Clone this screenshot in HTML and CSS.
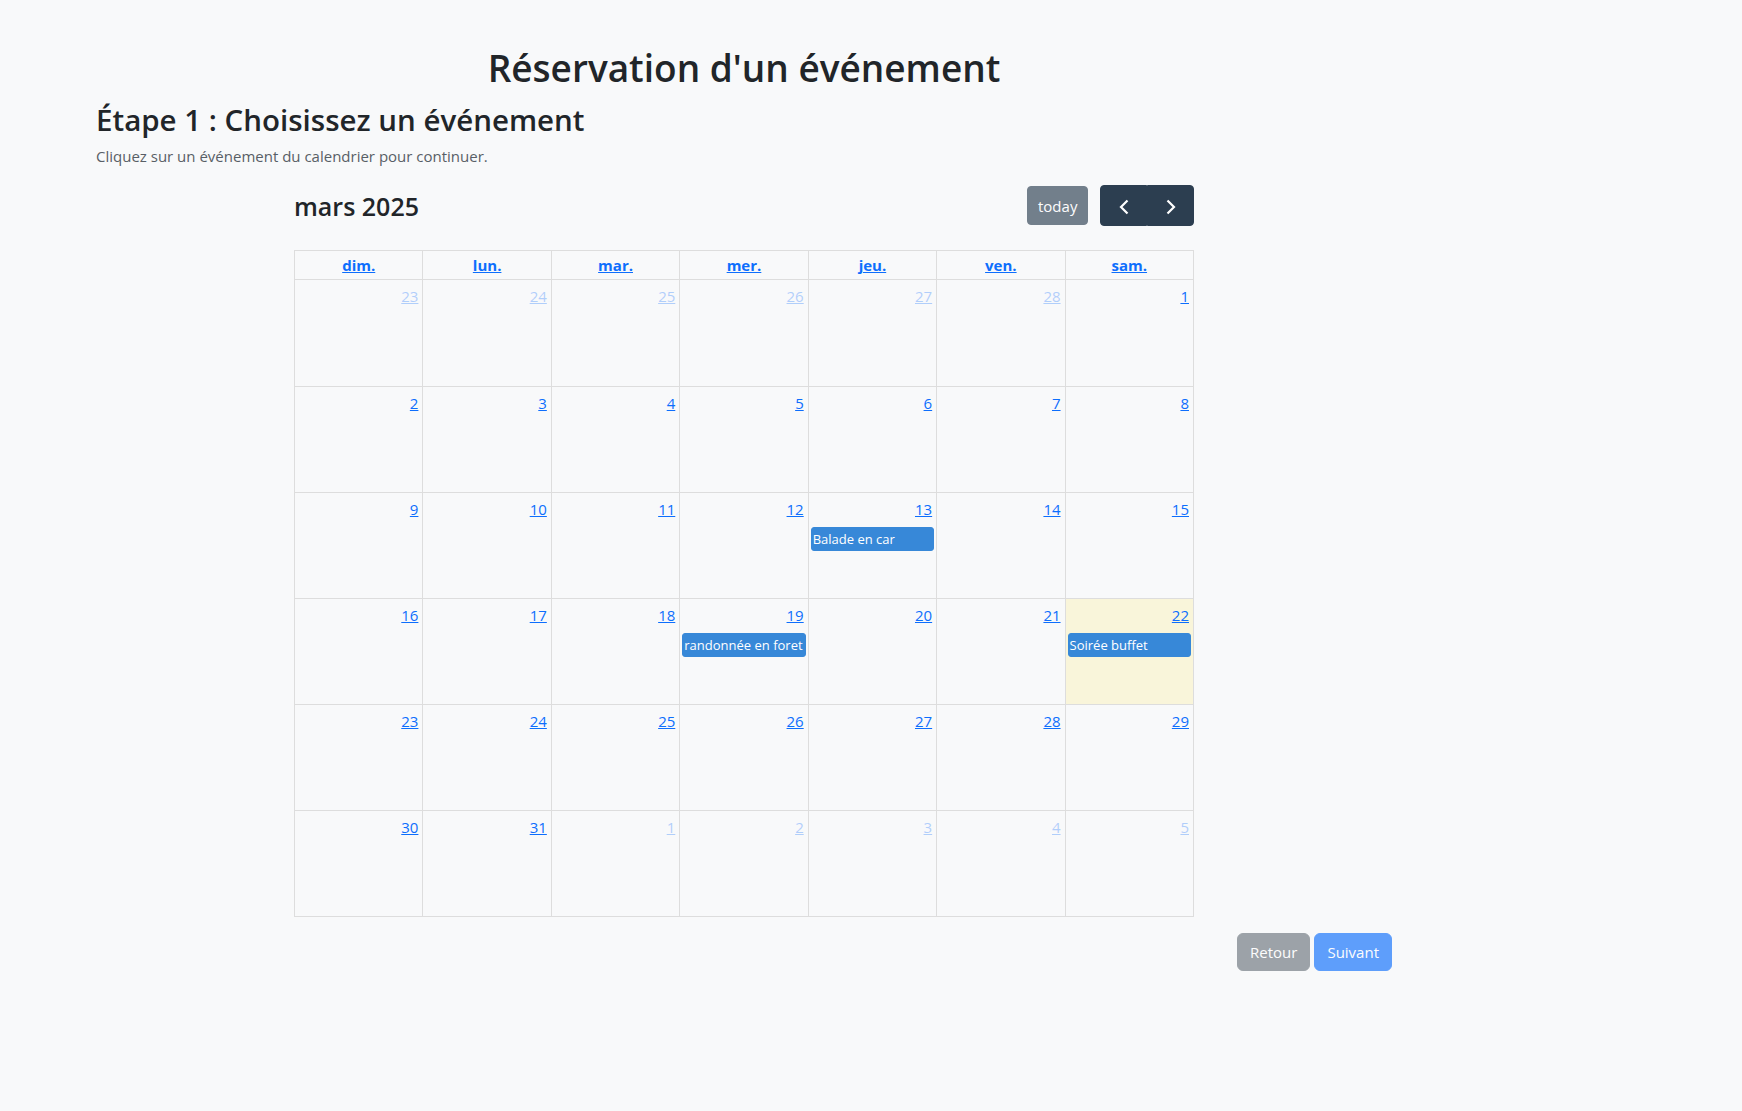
FILE: index.html
```html
<!DOCTYPE html>
<html lang="fr">
<head>
<meta charset="utf-8">
<title>Réservation d'un événement</title>
<link rel="stylesheet" href="styles.css">
</head>
<body>
<div class="page">
  <h1 class="title">Réservation d'un événement</h1>
  <h2 class="step">Étape 1 : Choisissez un événement</h2>
  <p class="hint">Cliquez sur un événement du calendrier pour continuer.</p>

  <div class="calendar">
    <div class="toolbar">
      <h2 class="cal-title">mars 2025</h2>
      <div class="toolbar-right">
        <button class="fc-btn today" disabled>today</button>
        <div class="btn-group">
          <button class="fc-btn nav prev" aria-label="prev"><svg width="24" height="24" viewBox="0 0 24 24"><path d="M15.5 5.5 L9 12 L15.5 18.5" fill="none" stroke="#fff" stroke-width="2.2"/></svg></button>
          <button class="fc-btn nav next" aria-label="next"><svg width="24" height="24" viewBox="0 0 24 24"><path d="M8.5 5.5 L15 12 L8.5 18.5" fill="none" stroke="#fff" stroke-width="2.2"/></svg></button>
        </div>
      </div>
    </div>

    <div class="grid">
      <div class="head"><a href="#">dim.</a></div>
      <div class="head"><a href="#">lun.</a></div>
      <div class="head"><a href="#">mar.</a></div>
      <div class="head"><a href="#">mer.</a></div>
      <div class="head"><a href="#">jeu.</a></div>
      <div class="head"><a href="#">ven.</a></div>
      <div class="head"><a href="#">sam.</a></div>

      <div class="day other"><a class="num" href="#">23</a></div>
      <div class="day other"><a class="num" href="#">24</a></div>
      <div class="day other"><a class="num" href="#">25</a></div>
      <div class="day other"><a class="num" href="#">26</a></div>
      <div class="day other"><a class="num" href="#">27</a></div>
      <div class="day other"><a class="num" href="#">28</a></div>
      <div class="day"><a class="num" href="#">1</a></div>

      <div class="day"><a class="num" href="#">2</a></div>
      <div class="day"><a class="num" href="#">3</a></div>
      <div class="day"><a class="num" href="#">4</a></div>
      <div class="day"><a class="num" href="#">5</a></div>
      <div class="day"><a class="num" href="#">6</a></div>
      <div class="day"><a class="num" href="#">7</a></div>
      <div class="day"><a class="num" href="#">8</a></div>

      <div class="day"><a class="num" href="#">9</a></div>
      <div class="day"><a class="num" href="#">10</a></div>
      <div class="day"><a class="num" href="#">11</a></div>
      <div class="day"><a class="num" href="#">12</a></div>
      <div class="day"><a class="num" href="#">13</a><div class="event">Balade en car</div></div>
      <div class="day"><a class="num" href="#">14</a></div>
      <div class="day"><a class="num" href="#">15</a></div>

      <div class="day"><a class="num" href="#">16</a></div>
      <div class="day"><a class="num" href="#">17</a></div>
      <div class="day"><a class="num" href="#">18</a></div>
      <div class="day"><a class="num" href="#">19</a><div class="event">randonnée en foret</div></div>
      <div class="day"><a class="num" href="#">20</a></div>
      <div class="day"><a class="num" href="#">21</a></div>
      <div class="day today-cell"><a class="num" href="#">22</a><div class="event">Soirée buffet</div></div>

      <div class="day"><a class="num" href="#">23</a></div>
      <div class="day"><a class="num" href="#">24</a></div>
      <div class="day"><a class="num" href="#">25</a></div>
      <div class="day"><a class="num" href="#">26</a></div>
      <div class="day"><a class="num" href="#">27</a></div>
      <div class="day"><a class="num" href="#">28</a></div>
      <div class="day"><a class="num" href="#">29</a></div>

      <div class="day"><a class="num" href="#">30</a></div>
      <div class="day"><a class="num" href="#">31</a></div>
      <div class="day other"><a class="num" href="#">1</a></div>
      <div class="day other"><a class="num" href="#">2</a></div>
      <div class="day other"><a class="num" href="#">3</a></div>
      <div class="day other"><a class="num" href="#">4</a></div>
      <div class="day other"><a class="num" href="#">5</a></div>
    </div>
  </div>

  <div class="actions">
    <button class="btn btn-back" disabled>Retour</button>
    <button class="btn btn-next" disabled>Suivant</button>
  </div>
</div>
</body>
</html>
```

FILE: styles.css
```css
html, body {
  margin: 0;
  padding: 0;
  background: #f8f9fa;
}

body {
  font-family: "Open Sans", "Noto Sans", sans-serif;
  font-size: 16px;
  line-height: 1.5;
  color: #212529;
}

.page {
  width: 1320px;
  box-sizing: border-box;
  margin-left: 84px;
  padding: 44px 12px 0;
}

.title {
  margin: 0 0 9px;
  font-size: 37px;
  font-weight: 600;
  line-height: 48px;
  text-align: center;
  color: #212529;
}

.step {
  margin: 0 0 5px;
  font-size: 29.5px;
  font-weight: 600;
  line-height: 38.4px;
  color: #212529;
}

.hint {
  margin: 0 0 17px;
  font-size: 15px;
  line-height: 24px;
  color: #585f66;
}

.calendar {
  max-width: 900px;
  margin: 0 auto;
}

.toolbar {
  display: flex;
  justify-content: space-between;
  align-items: center;
  margin-bottom: 24px;
}

.cal-title {
  margin: 0;
  font-size: 25px;
  font-weight: 600;
  line-height: 1.2;
}

.toolbar-right {
  display: flex;
  align-items: center;
  gap: 12px;
}

.fc-btn {
  font-family: inherit;
  font-size: 16px;
  line-height: 24px;
  color: #fff;
  background: #2c3e50;
  border: 1px solid #2c3e50;
  border-radius: 4px;
  padding: 6.4px 10.4px;
  cursor: pointer;
}

.fc-btn.today {
  height: 39px;
  opacity: 0.65;
  padding: 0 10px;
  font-size: 15px;
}

.btn-group {
  display: flex;
}

.fc-btn.nav {
  width: 46.8px;
  height: 41px;
  padding: 0;
  display: flex;
  align-items: center;
  justify-content: center;
}

.fc-btn.nav svg {
  display: block;
  margin-top: 3px;
}

.fc-btn.prev {
  border-top-right-radius: 0;
  border-bottom-right-radius: 0;
}

.fc-btn.next {
  border-top-left-radius: 0;
  border-bottom-left-radius: 0;
}

.grid {
  display: grid;
  grid-template-columns: repeat(7, 1fr);
  grid-template-rows: 29px repeat(6, 1fr);
  height: 667px;
  box-sizing: border-box;
  border-top: 1px solid #ddd;
  border-left: 1px solid #ddd;
}

.head {
  border-right: 1px solid #ddd;
  border-bottom: 1px solid #ddd;
  padding: 2px 4px;
  text-align: center;
  font-weight: 700;
  font-size: 15px;
  line-height: 24px;
}

.head a,
.num {
  color: #0d6efd;
  text-decoration: underline;
}

.day {
  border-right: 1px solid #ddd;
  border-bottom: 1px solid #ddd;
  display: flex;
  flex-direction: column;
  align-items: stretch;
  min-width: 0;
}

.num {
  align-self: flex-end;
  padding: 4px;
  font-size: 15px;
  line-height: 24px;
}

.day.other .num {
  opacity: 0.3;
}

.today-cell {
  background: rgba(255, 220, 40, 0.15);
}

.event {
  margin: 2px 2px 0;
  padding: 1px;
  background: #3788d8;
  border: 1px solid #3788d8;
  border-radius: 3px;
  color: #fff;
  font-size: 13px;
  line-height: 20.4px;
  white-space: nowrap;
  overflow: hidden;
}

.actions {
  display: flex;
  justify-content: flex-end;
  gap: 4px;
  margin-top: 16px;
}

.btn {
  font-family: inherit;
  font-size: 15px;
  line-height: 24px;
  padding: 6px 12px;
  border-radius: 6px;
  border: 1px solid transparent;
  color: #fff;
  opacity: 0.65;
}

.btn-back {
  background: #6c757d;
  border-color: #6c757d;
}

.btn-next {
  background: #0d6efd;
  border-color: #0d6efd;
}
```
